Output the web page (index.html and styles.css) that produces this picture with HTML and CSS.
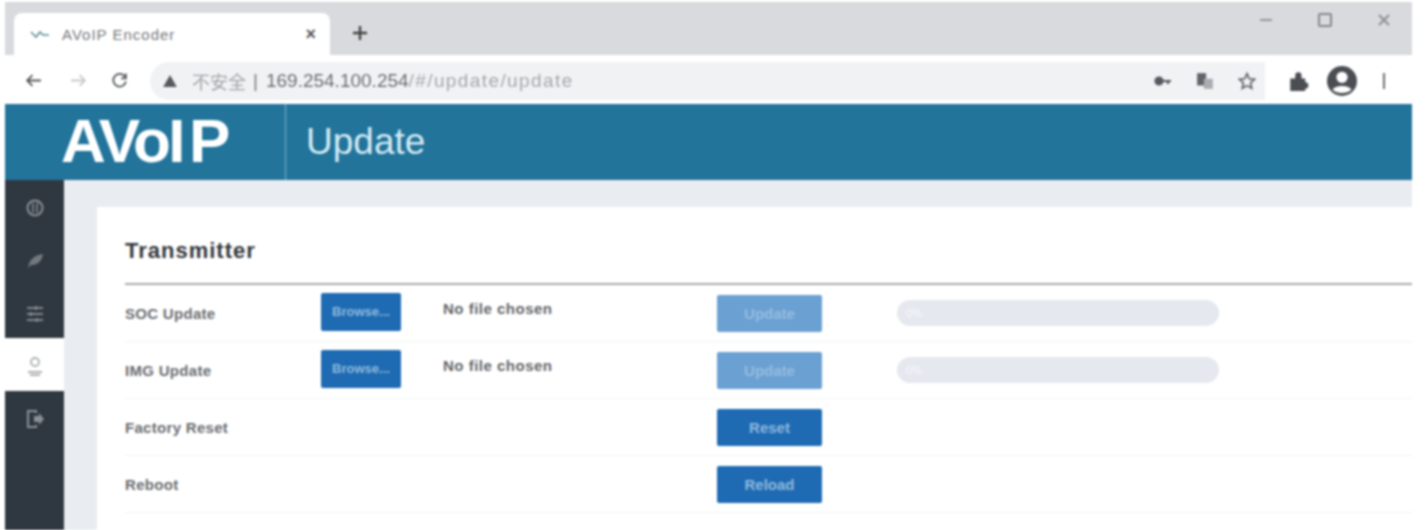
FILE: index.html
```html
<!DOCTYPE html>
<html lang="en">
<head>
    <meta charset="UTF-8">
    <meta name="viewport" content="width=device-width, initial-scale=1.0">
    <title>AVoIP Encoder</title>
    <link rel="stylesheet" href="styles.css">
</head>
<body>
    <div class="window">
        <div class="tabstrip">
            <div class="tab">
                <svg class="favicon" viewBox="0 0 20 12"><path d="M1 3l5 5 4-5 3 3h6" fill="none" stroke="#5f8f94" stroke-width="1.6"/></svg>
                <span class="tab-title">AVoIP Encoder</span>
                <span class="tab-close">&times;</span>
            </div>
            <svg class="new-tab" viewBox="0 0 16 16"><path d="M8 1v14M1 8h14" stroke="#444" stroke-width="2.4"/></svg>
            <div class="win-controls">
                <svg viewBox="0 0 16 16"><path d="M2 8h12" stroke="#8d8f93" stroke-width="1.8"/></svg>
                <svg viewBox="0 0 16 16"><rect x="2" y="2" width="12" height="12" rx="1" fill="none" stroke="#85878b" stroke-width="2"/></svg>
                <svg viewBox="0 0 16 16"><path d="M3 3l10 10M13 3L3 13" stroke="#8d8f93" stroke-width="2"/></svg>
            </div>
        </div>
        <div class="toolbar">
            <div class="nav-icons">
                <svg viewBox="0 0 16 16"><path d="M15 8H2M7 3L2 8l5 5" fill="none" stroke="#55585c" stroke-width="1.7"/></svg>
                <svg viewBox="0 0 16 16"><path d="M1 8h13M9 3l5 5-5 5" fill="none" stroke="#c6c8cb" stroke-width="1.7"/></svg>
                <svg class="reload" viewBox="0 0 16 16"><path d="M13.500 5A6 6 0 1 0 14 9M14 1.500V6H9.500" fill="none" stroke="#55585c" stroke-width="1.7"/></svg>
            </div>
            <div class="address">
                <svg class="warn" viewBox="0 0 16 14"><path d="M8 0l8 14H0z" fill="#55585c"/></svg>
                <span class="insecure">不安全</span>
                <span class="sep">|</span>
                <span class="host">169.254.100.254</span><span class="path">/#/update/update</span>
                <div class="addr-icons">
                    <svg viewBox="0 0 18 12"><circle cx="5" cy="6" r="3.500" fill="#55585c" stroke="#55585c" stroke-width="2.200"/><path d="M8 6h9M14 6v3" stroke="#55585c" stroke-width="2.200"/></svg>
                    <svg viewBox="0 0 16 16"><rect x="1" y="1" width="8" height="11" fill="#606368"/><rect x="7" y="6" width="8" height="9" fill="#a9acb0"/></svg>
                    <svg viewBox="0 0 16 16"><path d="M8 1.500l2 4.500 4.800.5-3.600 3.200 1 4.800L8 12.100l-4.200 2.400 1-4.800L1.200 6.500 6 6z" fill="none" stroke="#606368" stroke-width="1.500"/></svg>
                </div>
            </div>
            <div class="user-icons">
                <svg class="puzzle" viewBox="0 0 16 16"><path d="M1 6h4V3.500a2.500 2.500 0 0 1 5 0V6h3v3a2.500 2.500 0 0 1 0 5v2H1z" fill="#4a4d51"/></svg>
                <svg class="avatar" viewBox="0 0 24 24"><circle cx="12" cy="12" r="12" fill="#4a4d51"/><circle cx="12" cy="9" r="4.500" fill="#fff"/><path d="M4.500 19c2-4 13-4 15 0-4 3.500-11 3.500-15 0z" fill="#fff"/></svg>
                <svg class="menu" viewBox="0 0 4 18"><path d="M2 1v16" stroke="#6a6d71" stroke-width="2"/></svg>
            </div>
        </div>
        <div class="app-header">
            <div class="logo">AVoI<span class="logo-p">P</span></div>
            <div class="page-title">Update</div>
        </div>
        <div class="app-body">
            <nav class="sidebar">
                <div class="nav-item">
                    <svg viewBox="0 0 20 20"><circle cx="10" cy="10" r="7.500" fill="none" stroke="#9aa0a5" stroke-width="2"/><path d="M8 5v10M12 5v10" stroke="#9aa0a5" stroke-width="1.500"/></svg>
                </div>
                <div class="nav-item">
                    <svg viewBox="0 0 20 20"><path d="M3 17C4 9 9 4 18 3c-1 8-6 11-12 11z" fill="#7d8489"/></svg>
                </div>
                <div class="nav-item">
                    <svg viewBox="0 0 20 20"><path d="M2 4h16M2 10h16M2 16h16" stroke="#8f959a" stroke-width="1.800"/><path d="M11 2v4M6 8v4M12 14v4" stroke="#8f959a" stroke-width="2"/></svg>
                </div>
                <div class="nav-item active">
                    <svg viewBox="0 0 20 20"><circle cx="10" cy="6" r="4" fill="none" stroke="#9ea3a6" stroke-width="1.800"/><path d="M3 16h14M5 19h10" stroke="#9ea3a6" stroke-width="1.800"/></svg>
                </div>
                <div class="nav-item">
                    <svg viewBox="0 0 20 20"><path d="M11 4V2H3v16h8v-2" fill="none" stroke="#9aa0a5" stroke-width="2"/><path d="M9 7h5V4l5 6-5 6v-3H9z" fill="#9aa0a5"/></svg>
                </div>
            </nav>
            <main class="content">
                <section class="card">
                    <h2 class="card-title">Transmitter</h2>
                    <div class="row">
                        <span class="label">SOC Update</span>
                        <button class="btn btn-browse">Browse...</button>
                        <span class="file-name">No file chosen</span>
                        <button class="btn btn-wide btn-disabled">Update</button>
                        <div class="progress">0%</div>
                    </div>
                    <div class="row">
                        <span class="label">IMG Update</span>
                        <button class="btn btn-browse">Browse...</button>
                        <span class="file-name">No file chosen</span>
                        <button class="btn btn-wide btn-disabled">Update</button>
                        <div class="progress">0%</div>
                    </div>
                    <div class="row">
                        <span class="label">Factory Reset</span>
                        <span></span>
                        <span></span>
                        <button class="btn btn-wide">Reset</button>
                    </div>
                    <div class="row">
                        <span class="label">Reboot</span>
                        <span></span>
                        <span></span>
                        <button class="btn btn-wide">Reload</button>
                    </div>
                </section>
            </main>
        </div>
    </div>
</body>
</html>
```

FILE: styles.css
```css
html, body {
    margin: 0;
    height: 530px;
    overflow: hidden;
    background: #fff;
    font-family: 'Liberation Sans', 'Noto Sans CJK SC', Arial, sans-serif;
}
.window {
    margin: 0 13px 0 5px;
    height: 530px;
    display: flex;
    flex-direction: column;
    filter: blur(1.1px);
}
.tabstrip {
    height: 53px;
    margin-top: 2px;
    background: #d8dadd;
    display: flex;
    align-items: flex-end;
    flex-shrink: 0;
}
.tab {
    width: 316px;
    height: 42px;
    margin-left: 9px;
    box-sizing: border-box;
    padding: 1px 14px 0 16px;
    background: #fff;
    border-radius: 8px 8px 0 0;
    display: flex;
    align-items: center;
}
.favicon {
    width: 20px;
    height: 12px;
    margin-right: 12px;
}
.tab-title {
    font-size: 15px;
    letter-spacing: 1px;
    color: #75787c;
    flex: 1;
}
.tab-close {
    font-size: 18px;
    font-weight: 700;
    color: #55585c;
}
.new-tab {
    width: 16px;
    height: 16px;
    margin: 0 0 14px 22px;
}
.win-controls {
    margin-left: auto;
    margin-right: 20px;
    align-self: flex-start;
    padding-top: 10px;
    display: flex;
    gap: 43px;
}
.win-controls svg {
    width: 16px;
    height: 16px;
}
.toolbar {
    height: 49px;
    display: flex;
    align-items: center;
    flex-shrink: 0;
    padding-top: 2px;
    box-sizing: border-box;
}
.nav-icons {
    display: flex;
    gap: 28px;
    padding-left: 20px;
    width: 125px;
    box-sizing: border-box;
}
.nav-icons svg {
    width: 17px;
    height: 17px;
}
.nav-icons .reload {
    margin-left: -4px;
}
.address {
    width: 1115px;
    height: 38px;
    box-sizing: border-box;
    margin-left: 20px;
    padding-left: 13px;
    background: #f1f2f4;
    border-radius: 19px 0 0 19px;
    display: flex;
    align-items: center;
    font-size: 19px;
}
.warn {
    width: 14px;
    height: 12px;
    margin-right: 15px;
}
.insecure {
    color: #a0a3a6;
    font-size: 18px;
}
.sep {
    color: #777;
    margin: 0 8px 0 7px;
}
.host {
    color: #6a6d71;
}
.path {
    color: #a4a7aa;
    letter-spacing: 1.4px;
}
.addr-icons {
    margin-left: auto;
    padding-right: 9px;
    display: flex;
    align-items: center;
    gap: 24px;
}
.addr-icons svg {
    width: 18px;
    height: 18px;
}
.user-icons {
    display: flex;
    align-items: center;
    padding-left: 24px;
}
.puzzle {
    width: 20px;
    height: 20px;
}
.avatar {
    width: 30px;
    height: 30px;
    margin-left: 18px;
}
.menu {
    width: 4px;
    height: 18px;
    margin-left: 25px;
}
.app-header {
    height: 76px;
    background: #22749b;
    display: flex;
    align-items: center;
    flex-shrink: 0;
}
.logo {
    width: 281px;
    height: 100%;
    box-sizing: border-box;
    padding-left: 56px;
    border-right: 1px solid #7fb2c9;
    color: #fff;
    font-size: 62px;
    font-weight: 700;
    letter-spacing: -2.5px;
    line-height: 74px;
}
.logo-p {
    margin-left: 6px;
}
.page-title {
    padding-left: 20px;
    font-size: 37px;
    color: #d4ebf4;
}
.app-body {
    flex: 1;
    display: flex;
    min-height: 0;
}
.sidebar {
    width: 59px;
    flex-shrink: 0;
    background: #2f3840;
}
.nav-item {
    height: 52.7px;
    box-sizing: border-box;
    padding-top: 4px;
    display: flex;
    align-items: center;
    justify-content: center;
}
.nav-item svg {
    width: 20px;
    height: 20px;
    opacity: 0.85;
}
.nav-item.active {
    background: #fff;
}
.content {
    flex: 1;
    background: #e9edf2;
    padding: 27px 0 0 33px;
    min-width: 0;
}
.card {
    height: 100%;
    background: #fff;
    padding-left: 28px;
}
.card-title {
    margin: 0;
    height: 78px;
    box-sizing: border-box;
    padding-top: 31px;
    font-size: 22px;
    letter-spacing: 1px;
    line-height: 26px;
    color: #33373b;
    border-bottom: 2px solid #a8a9aa;
}
.row {
    height: 57px;
    box-sizing: border-box;
    display: grid;
    grid-template-columns: 196px 122px 274px 180px 322px;
    align-items: center;
    border-bottom: 1px solid #f1f2f4;
}
.label {
    font-size: 15px;
    font-weight: 700;
    letter-spacing: 0.3px;
    color: #6a6d70;
}
.file-name {
    font-size: 15px;
    font-weight: 700;
    letter-spacing: 0.5px;
    color: #626568;
    margin-bottom: 10px;
}
.btn {
    border: none;
    border-radius: 2px;
    height: 37px;
    padding: 0;
    font-family: inherit;
    font-size: 15px;
    font-weight: 700;
    color: #8fb8dd;
    background: #1e6bb3;
}
.btn-browse {
    width: 80px;
    height: 38px;
    margin-bottom: 3px;
    font-size: 13px;
}
.btn-wide {
    width: 105px;
}
.btn-disabled {
    background: #6ba0d2;
    color: #94bce0;
}
.progress {
    width: 322px;
    height: 26px;
    box-sizing: border-box;
    padding-left: 9px;
    border-radius: 13px;
    background: #e5e9ef;
    font-size: 11px;
    line-height: 26px;
    color: #f6f7f9;
}
```
